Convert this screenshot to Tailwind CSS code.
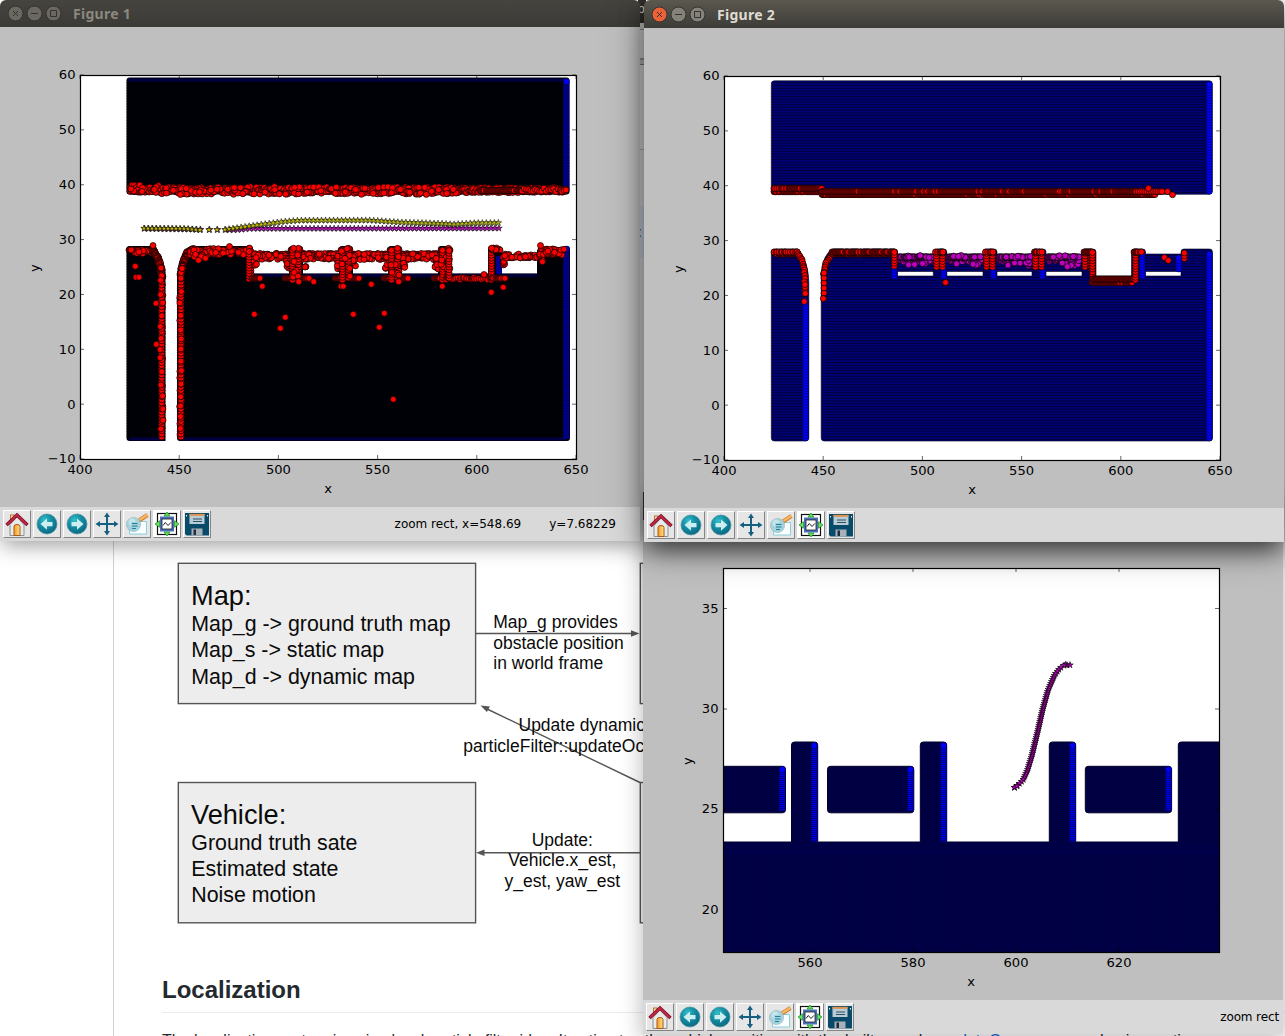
<!DOCTYPE html>
<html lang="en">
<head>
<meta charset="utf-8">
<title>Figures</title>
<script src="https://cdn.jsdelivr.net/npm/@tailwindcss/browser@4"></script>
</head>
<body class="relative h-[1036px] w-[1285px] overflow-hidden bg-white font-['Liberation_Sans',sans-serif]">

<svg class="absolute size-0">
  <defs>
    <radialGradient id="teal" cx=".38" cy=".3" r=".75"><stop offset="0" stop-color="#35c0cc"/><stop offset=".45" stop-color="#148ea3"/><stop offset="1" stop-color="#0a6680"/></radialGradient>
    <linearGradient id="door" x2="1"><stop offset="0" stop-color="#f39a1f"/><stop offset="1" stop-color="#ffe08a"/></linearGradient>
    <symbol id="home" viewBox="0 0 24 24">
      <rect x="5.5" y="3" width="3.5" height="8" fill="#fbe0a8" stroke="#b5652a" stroke-width=".9"/>
      <path d="M5 12.5 12 5l7 7.500V23.500H5Z" fill="#e9eaea" stroke="#8d8f90" stroke-width="1"/>
      <path d="M9 23.500V14.500q0-2 3-2t3 2V23.500Z" fill="url(#door)" stroke="#a85a1c" stroke-width="1"/>
      <path d="M1.500 13 12 3 22.500 13" fill="none" stroke="#7b1028" stroke-width="3.400"/>
      <path d="M2 12.600 12 3.200 22 12.600" fill="none" stroke="#bd2742" stroke-width="2"/>
    </symbol>
    <symbol id="back" viewBox="0 0 24 24"><circle cx="12" cy="12" r="10" fill="url(#teal)" stroke="#4b8f9d" stroke-width=".7"/><path d="M5.500 12 12 6.500v3.500h5.500v4.200H12v3.500Z" fill="#cdeef1"/></symbol>
    <symbol id="forward" viewBox="0 0 24 24"><circle cx="12" cy="12" r="10" fill="url(#teal)" stroke="#4b8f9d" stroke-width=".7"/><path d="M18.500 12 12 6.500v3.500H6.500v4.200H12v3.500Z" fill="#cdeef1"/></symbol>
    <symbol id="move" viewBox="0 0 24 24"><path d="M12 3v18M3 12h18" stroke="#175f80" stroke-width="2"/><path d="M12 .5 15 5H9ZM12 23.500 15 19H9ZM.5 12 5 9v6ZM23.500 12 19 9v6Z" fill="#175f80"/></symbol>
    <symbol id="zoomrect" viewBox="0 0 24 24">
      <path d="M4.500 9.500h17V22h-17Z" fill="#fbfeff" stroke="#86cfdd" stroke-width="1"/>
      <path d="M14 8.500 22.500 3" stroke="#c47a2c" stroke-width="4"/><path d="M14.300 8 22.400 2.900" stroke="#f9b65e" stroke-width="2.600"/>
      <circle cx="8.500" cy="12.500" r="7" fill="#a6d3dc" stroke="#9dbdc4" stroke-width=".8"/><circle cx="7" cy="10" r="3.500" fill="#c5e5ea"/>
      <path d="M6 10h7.500v8H7Z" fill="#9fd3df"/><path d="M7 11.500h5.500M7 14h5.500M7 16.500h4" stroke="#287f98" stroke-width="1"/>
    </symbol>
    <symbol id="subplots" viewBox="0 0 24 24">
      <rect x="2.500" y="1.500" width="19" height="21" fill="#fff" stroke="#111" stroke-width="1.200"/>
      <rect x="5" y="4.500" width="14" height="15" fill="#4a70bb"/><rect x="7" y="7" width="10" height="10" fill="#fff" stroke="#222" stroke-width=".8"/>
      <path d="M8 13.500l2.300-3 2.700 3 2.800-3" fill="none" stroke="#222" stroke-width="1"/>
      <path d="M12 0l3 4H9ZM12 24l3-4H9ZM0 12l4.500-3.300v6.600ZM24 12l-4.500-3.300v6.600Z" fill="#62e25a" stroke="#1d8a22" stroke-width=".7"/>
    </symbol>
    <symbol id="save" viewBox="0 0 24 24">
      <path d="M0 1h24v22.500H1.500L0 22Z" fill="#084a69"/><rect x="4.500" y="2" width="15" height="10" fill="#b9cbd5"/><rect x="4.500" y="1.800" width="15" height="2" fill="#e0934c"/>
      <path d="M8 7h9M8 9.500h9" stroke="#2d5268" stroke-width="1.200"/><path d="M1.500 3v1.500M22.500 3v1.500" stroke="#dfe9ee" stroke-width="1"/>
      <rect x="6.500" y="16.500" width="11" height="7" fill="#a8b0b8"/><rect x="8.500" y="17.500" width="2.500" height="5.500" fill="#1f2d40"/>
    </symbol>
  </defs>
</svg>

<!-- Document page behind the windows -->
<main class="ml-[113px] flex h-full flex-col border-l border-[#d0d1d5] pt-[541px]">
  <svg class="h-[400px] w-[540px] shrink-0 font-['Liberation_Sans',sans-serif]" viewBox="114 541 540 400" fill="#0a0a0a">
    <g fill="#ededed" stroke="#555" stroke-width="1.400">
      <rect x="178.300" y="563.300" width="297.300" height="140.300"/><rect x="178.300" y="782.500" width="297.300" height="140.300"/>
      <rect x="640.300" y="563.300" width="200" height="140.300"/><rect x="640.300" y="782.500" width="200" height="140.300"/>
    </g>
    <g stroke="#555" stroke-width="1.400" fill="none"><path d="M476 633.500H634M640 852.700H482M640 782.500 486 708.500"/></g>
    <path d="M639.500 633.500l-8.500-3.200v6.400ZM476 852.700l8.500-3.200v6.400ZM480.500 705.500l9.400.9-3 5.600Z" fill="#555"/>
    <g font-size="27.200"><text x="191" y="604.700">Map:</text><text x="191" y="823.500">Vehicle:</text></g>
    <g font-size="21.350">
      <text x="191.300" y="631">Map_g -&gt; ground truth map</text><text x="191.300" y="657">Map_s -&gt; static map</text><text x="191.300" y="683.500">Map_d -&gt; dynamic map</text>
      <text x="191.300" y="850">Ground truth sate</text><text x="191.300" y="876">Estimated state</text><text x="191.300" y="902.300">Noise motion</text>
    </g>
    <g font-size="17.500">
      <text x="493.300" y="628">Map_g provides</text><text x="493.300" y="648.700">obstacle position</text><text x="493.300" y="669">in world frame</text>
      <text x="518.500" y="731">Update dynamic map</text><text x="463.300" y="751.500">particleFilter::updateOccupancy</text>
      <g text-anchor="middle"><text x="562.300" y="846">Update:</text><text x="562.300" y="866.300">Vehicle.x_est,</text><text x="562.300" y="887">y_est, yaw_est</text></g>
    </g>
  </svg>
  <h2 class="ml-12 mt-[31px] border-b border-[#eaecef] pb-[5px] text-2xl leading-[35px] font-bold text-[#24292e]">Localization</h2>
  <p class="ml-12 mt-[16px] text-base leading-6 whitespace-nowrap text-[#24292e]">The localization system is using local particle filter idea. It estimates the vehicle position with the built map, by <span class="text-[#0366d6]">updateOccupancy</span>, and noise motion</p>
</main>

<!-- Sliver of the browser window between the two upper figures -->
<div class="absolute left-[638px] top-0 flex h-[541px] w-[8px] flex-col bg-[#f4f5f6]">
  <div class="h-[23px] bg-[#33322e] pt-[1px] text-[12px] leading-4 text-[#dfdbd2]">o</div>
  <div class="h-[7px] border-b border-[#999] bg-[#ddd]"></div>
  <div class="h-[30px] border-b-2 border-[#aaa] bg-[#eee]"></div>
  <div class="h-[5px] border-b border-[#888] bg-[#d5d0cc]"></div>
  <div class="h-[85px] border-b border-[#c8c8c8]"></div>
  <div class="mt-[56px] h-[52px] bg-[#e6effa] pt-[18px] text-[14px] leading-4 text-[#0366d6]">:</div>
</div>

<!-- Figure 3 -->
<section class="absolute left-[643px] top-[492px] flex w-[640px] flex-col shadow-[0_4px_20px_2px_rgba(0,0,0,.25)]">
  <div class="h-7 bg-[#3f3e39]"></div>
  <svg id="fig3" class="h-[480px] w-[640px] bg-[#bfbfbf] font-['DejaVu_Sans',sans-serif] text-[13.1px]" viewBox="643 520 640 480"></svg>
  <div data-toolbar class="flex h-[34px] items-center gap-[2px] bg-[#d9d9d9] pl-[3px] pr-[4px] font-['DejaVu_Sans',sans-serif] text-[12px] tracking-[-0.01em] text-black"><span class="order-last ml-auto">zoom rect</span></div>
</section>

<!-- Figure 1 -->
<section class="absolute left-0 top-0 flex w-[640px] flex-col shadow-[0_6px_20px_-2px_rgba(0,0,0,.4)]">
  <header class="flex h-[27px] items-center rounded-t-md bg-linear-to-b from-[#45443f] to-[#3b3a36] pl-2 font-['Noto_Sans',sans-serif] text-sm font-bold tracking-[0.02em] text-[#8b8880]">
    <svg class="h-[17px] w-[56px]" viewBox="0 0 56 17" fill="#6a6861" stroke="#33322e"><circle cx="7.500" cy="8.500" r="7.500"/><circle cx="26.500" cy="8.500" r="7.500"/><circle cx="45.500" cy="8.500" r="7.500"/><path d="M5 6l5 5M10 6l-5 5M23 8.500h7M42.500 5.500h6v6h-6Z" fill="none"/></svg>
    <span class="ml-[9px]">Figure 1</span>
  </header>
  <svg id="fig1" class="h-[480px] w-[640px] bg-[#bfbfbf] font-['DejaVu_Sans',sans-serif] text-[13.1px]" viewBox="0 27 640 480"></svg>
  <div data-toolbar class="flex h-[34px] items-center gap-[2px] bg-[#d9d9d9] pl-[3px] pr-6 font-['DejaVu_Sans',sans-serif] text-[12px] text-black"><span class="order-last ml-auto">zoom rect, x=548.69</span><span class="order-last ml-[26px]">y=7.68229</span></div>
</section>

<!-- Figure 2, the focused window -->
<section class="absolute left-[644px] top-0 flex w-[640px] flex-col rounded-t-md shadow-[0_10px_24px_-2px_rgba(0,0,0,.65),0_6px_44px_0_rgba(0,0,0,.25)]">
  <header class="flex h-[28px] items-center rounded-t-md bg-linear-to-b from-[#5b584f] to-[#3d3c38] pl-[7px] pt-px font-['Noto_Sans',sans-serif] text-sm font-bold tracking-[0.02em] text-[#dfdbd2]">
    <svg class="h-[17px] w-[56px]" viewBox="0 0 56 17" fill="#85827a" stroke="#33322e"><circle cx="8.500" cy="8.500" r="7.500" fill="#ec6238"/><circle cx="27.500" cy="8.500" r="7.500"/><circle cx="46.500" cy="8.500" r="7.500"/><path d="M6 6l5 5M11 6l-5 5M24 8.500h7M43.500 5.500h6v6h-6Z" fill="none"/></svg>
    <span class="ml-[10px]">Figure 2</span>
  </header>
  <svg id="fig2" class="h-[480px] w-[640px] bg-[#bfbfbf] font-['DejaVu_Sans',sans-serif] text-[13.1px]" viewBox="644 28 640 480"></svg>
  <div data-toolbar class="flex h-[34px] items-center gap-[2px] bg-[#d9d9d9] pl-[3px]"></div>
</section>

<script>
// Toolbar buttons
for (const bar of document.querySelectorAll('[data-toolbar]')) {
  let html = '';
  for (const n of ['home', 'back', 'forward', 'move', 'zoomrect', 'subplots', 'save'])
    html += `<button class="flex size-7 items-center justify-center border border-t-white border-l-white border-r-[#858585] border-b-[#858585] ${n === 'subplots' ? 'bg-white' : 'bg-[#e6e6e6]'}"><svg class="size-6 shrink-0"><use href="#${n}"/></svg></button>`;
  bar.insertAdjacentHTML('afterbegin', html);
}

let seed = 7;
const rnd = () => (seed = (seed * 16807) % 2147483647) / 2147483647;
const jit = a => (rnd() * 2 - 1) * a;
const RED = '#f00', BLUE = '#00f', MAG = '#bf00bf', YEL = '#bfbf00';
const dot = (x, y, c = RED) => `<circle cx="${x.toFixed(1)}" cy="${y.toFixed(1)}" r="3"${c === BLUE ? ' stroke-opacity=".6"' : ''} fill="${c}"/>`;
const star = (x, y, c) => {
  let p = '';
  for (let i = 0; i < 10; i++) {
    const r = i % 2 ? 1.3 : 3.4, a = -Math.PI / 2 + i * Math.PI / 5;
    p += (x + r * Math.cos(a)).toFixed(2) + ',' + (y + r * Math.sin(a)).toFixed(2) + ' ';
  }
  return `<polygon points="${p}" fill="${c}"/>`;
};
const interp = (pts, x) => {
  for (let i = 1; i < pts.length; i++) if (x <= pts[i][0]) {
    const [a, b] = [pts[i - 1], pts[i]];
    return a[1] + (b[1] - a[1]) * (x - a[0]) / (b[0] - a[0]);
  }
  return pts[pts.length - 1][1];
};
const column = (x, y0, y1, c, step = 2.74) => { let s = ''; for (let y = y1; y >= y0; y -= step) s += dot(x, y, c); return s; };
// horizontal run of closely spaced markers with an occasional wider step
const run = (x0, x1, y, c = RED, gap = .04, jy = 0) => { let s = ''; for (let x = x0; x <= x1; x += rnd() < gap ? 2.2 : .8) s += dot(x, y + jit(jy), c); return s + dot(x1, y, c); };
const cloud = (x0, x1, y0, y1, n, c = RED) => { let s = ''; for (let i = 0; i < n; i++) s += dot(x0 + rnd() * (x1 - x0), y0 + rnd() * (y1 - y0), c); return s; };
const trace = (pts, n, j, c = RED) => { let s = ''; for (let k = 1; k < pts.length; k++) for (let i = 0; i < n; i++) { const t = i / n; s += dot(pts[k-1][0] + (pts[k][0]-pts[k-1][0]) * t + jit(j), pts[k-1][1] + (pts[k][1]-pts[k-1][1]) * t + jit(j), c); } return s; };

function figure(id, x, y, xt, yt, defs, body, ylab = 41) {
  let t = '', l = '';
  for (const [px, s] of xt) { t += `M${px} ${y}v4M${px} ${y + 384}v-4`; l += `<text x="${px}" y="${y + 398.600}" text-anchor="middle">${s}</text>`; }
  for (const [py, s] of yt) { t += `M${x} ${py}h4M${x + 496} ${py}h-4`; l += `<text x="${x - 4.5}" y="${py + 4.4}" text-anchor="end">${s}</text>`; }
  document.getElementById(id).innerHTML = `<defs><clipPath id="${id}c"><rect x="${x}" y="${y}" width="496" height="384"/></clipPath>${defs}</defs>
  <rect x="${x}" y="${y}" width="496" height="384" fill="#fff"/><g clip-path="url(#${id}c)">${body}</g>
  <path d="${t}" stroke="#000" stroke-width=".6"/><rect x="${x + .5}" y="${y + .5}" width="496" height="384" fill="none" stroke="#000" stroke-width="1.2"/>${l}
  <text x="${x + 248}" y="${y + 417.600}" text-anchor="middle">x</text><text transform="translate(${x - ylab} ${y + 193}) rotate(-90)" text-anchor="middle">y</text>`;
}
const xt = o => [400, 450, 500, 550, 600, 650].map((v, i) => [o + i * 99.2, v]);
const yt = o => [60, 50, 40, 30, 20, 10, 0, '−10'].map((v, i) => [o + i * 54.86, v]);

// Figure 1
(() => {
  let b = '<g fill="#000007"><rect x="126.500" y="77.500" width="443" height="117" rx="3"/>' +
    '<path d="M126.500 249q0-3 3-3H152Q165 256 165.500 280V441H129.500q-3 0-3-3Z"/>' +
    '<path d="M177 438V275Q179 250 192 246H250q3 0 3 3V273.500H289V249q0-3 3-3h8q3 0 3 3v24.500H339V249q0-3 3-3h8q3 0 3 3v24.500H388V249q0-3 3-3h8q3 0 3 3v24.500H438V249q0-3 3-3h8q3 0 3 3V273.500H488V249q0-3 3-3h8q3 0 3 3v24.500H537V250L567 246q3 0 3 3V438q0 3-3 3H180q-3 0-3-3Z"/></g>';
  b += '<path d="M128 80H566M129 439H164M179 439H566" stroke="#000042" stroke-width="3"/><path d="M253 275.500H537" stroke="#000038" stroke-width="3.500"/><path d="M126.500 82V190M126.500 250V438M165.500 285V438M177.300 285V438" stroke="#333" stroke-width=".6" stroke-dasharray="1 1.700"/>';
  b += '<path d="M566.300 82V191M566.300 249V439M499 256V274" stroke="#000090" stroke-width="6"/><path d="M566.300 82V191M566.300 249V439" stroke="#00005a" stroke-width="6" stroke-dasharray=".7 2"/>';
  b += '<g stroke="#000" stroke-width=".7">' + dot(566.5, 81.5, BLUE) + dot(566.3, 249, BLUE);
  const cy = x => x < 160 ? 188.5 : 190.5;
  b += run(130, 565, 190, RED, .02, 2.5);
  for (let x = 130; x < 566; x += 1.1) b += dot(x, cy(x) + jit(x > 460 ? 2 : 3.6));
  for (let i = 0; i < 130; i++) { const x = 130 + rnd() * 330; b += dot(x, cy(x) + jit(4)); }
  b += run(480, 522, 190.5, RED, .02) + run(522, 566, 190, RED, .9, 2);
  b += run(129, 153, 250) + cloud(130, 154, 249, 254, 22);
  b += trace([[153, 249], [158, 258], [161, 268], [162, 280], [162, 438]], 30, 1.1) + column(161.7, 275, 437, RED, 3.1);
  b += trace([[194, 249], [187, 253], [183, 263], [180.5, 275], [180.7, 350], [180.7, 438]], 26, 1) + column(181, 270, 437, RED, 3.1);
  for (let y = 268; y < 438; y += 8 + rnd() * 8) b += dot(161.5 + jit(1.5), y) + dot(180.8 + jit(1.2), y + jit(4));
  b += run(190, 250, 250) + cloud(190, 250, 248, 255, 70) + cloud(194, 220, 254, 257, 5);
  b += dot(153, 245.5) + dot(229.5, 246.5) + column(251, 249, 279) + column(249, 249, 279);
  for (const [x0, x1] of [[254, 291], [303, 341], [353, 390], [402, 440]]) {
    b += run(x0, x1, 255, RED, .05, 1.5) + cloud(x0, x1, 253.500, 259.500, 55) + cloud(x0, x0 + 3, 256, 268, 6) + cloud(x1 - 5, x1, 256, 269, 10);
    b += run(x0 - 2, x0 + 6, 278.300) + run(x1 - 6, x1, 278.300);
  }
  for (const x of [291, 341, 390, 441]) b += run(x, x + 9, 250) + column(x + 1.5, 248, 280, RED, 2.7) + column(x + 7.5, 248, 278, RED, 2.7) + cloud(x, x + 9, 248, 278, 8);
  b += run(446, 490, 278.5, RED, .5, 1.2) + column(449, 249, 278);
  b += column(491.5, 250, 280) + run(492, 500, 250) + cloud(491, 501, 248, 251, 8) + cloud(503, 505, 258, 270, 6) + run(492, 505, 278.3, RED, .2) + dot(484, 274.5);
  b += run(503, 540, 256, RED, .4, 2) + cloud(503, 540, 255, 258, 22) + cloud(538, 543, 249, 262, 10) + cloud(539, 562, 249, 255, 32) + dot(540.5, 245.5) + dot(564, 249.3);
  for (const [x, y] of [[262.3,286.3],[254.3,314.3],[285.3,317.3],[280.3,328.3],[313.7,281.7],[341,286.3],[343.3,286.3],[135.3,266.3],[136,277.3],[139,277.3],[156,303.3],[156.3,344.3],[371.3,284.3],[353.3,314.3],[384.3,313.3],[379.3,327.3],[442.3,286.3],[491.3,292.3],[503.3,287.3],[393.3,399.3],[298.7,281.7],[398.7,281.7],[198.5,260.3],[205.5,258.3]]) b += dot(x, y);
  b += '</g><g stroke="#000" stroke-width=".55">';
  const xs = []; for (let x = 144; x < 203; x += 4) xs.push(x);
  xs.push(209, 217); for (let x = 225; x < 499; x += 4.02) xs.push(x);
  const pur = [[144, 228.6], [200, 229.5], [235, 230], [250, 228.6], [498, 228.3]];
  const yel = [[144, 228.4], [185, 228.6], [200, 230], [225, 229.6], [245, 226.8], [265, 224], [285, 221.5], [300, 220.4], [370, 220.3], [400, 222.3], [443, 223.6], [453, 224.3], [475, 223], [498, 222.8]];
  for (const x of xs) b += star(x + .6, interp(pur, x), MAG);
  for (const x of xs) b += star(x, interp(yel, x), YEL);
  figure('fig1', 80, 75, xt(80), yt(75), '', b + '</g>');
})();

// Figure 2
(() => {
  let b = '<g fill="url(#stripe)" stroke="#00001c" stroke-width=".6"><rect x="771.300" y="80.800" width="441" height="113.500" rx="3"/>' +
    '<path d="M771.300 252q0-3 3-3H798Q808.500 262 808.800 282V438q0 3-3 3H774.300q-3 0-3-3Z"/>' +
    '<path d="M821.200 438V275Q823 252 834 249H894.500q3 0 3 3V276H933.300V252q0-3 3-3h7.500q3 0 3 3V276H983V252q0-3 3-3h8q3 0 3 3V276H1032V252q0-3 3-3h8q3 0 3 3V276H1082V252q0-3 3-3h8q3 0 3 3V279H1131.500V252q0-3 3-3h8q3 0 3 3V276H1181V252q0-3 3-3h25.500q3 0 3 3V438q0 3-3 3H824.200q-3 0-3-3Z"/>';
  for (const [x, w] of [[897, 37], [946.5, 37], [996, 37], [1045.5, 37], [1145.5, 36]]) b += `<rect x="${x}" y="254" width="${w}" height="17.500"/>`;
  b += '</g><g stroke="#000" stroke-width=".7">';
  b += column(1209.3, 83, 191.300, BLUE) + column(1209.3, 252, 438, BLUE) + column(805.500, 300, 438, BLUE);
  for (const x of [894.300, 943.700, 993.300, 1042.500, 1142.300]) b += column(x, 252, 276, BLUE);
  b += column(1178.800, 257, 269, BLUE);
  for (const [x0, x1] of [[899, 932], [949, 981], [999, 1031], [1048, 1079]]) {
    b += run(x0, x1, 260, MAG, .02, 1.8) + cloud(x1 - 8, x1, 260, 266, 6, MAG) + cloud(x0 + 5, x1 - 3, 262, 266, 3, MAG) + run(x0, x1, 257, MAG, .2) + cloud(x0 + 4, x1, 255.5, 257.5, 7, MAG);
  }
  b += dot(1067.300, 266.700, MAG);
  b += run(774, 822, 191.700, RED, .05) + run(774, 790, 188.500, RED, .4) + run(790, 821.500, 188.500);
  b += run(822, 1155, 194.500, RED, .05) + run(822, 1145, 191.500, RED, .055) + run(1136, 1162, 191.500, RED, .9) + dot(1167.500, 191.500) + dot(1172.500, 194.700) + dot(1148.500, 188.300);
  b += run(776, 797, 254, RED, .1) + run(774, 797, 252, RED, .3);
  b += trace([[797, 252], [802, 260], [804.500, 270], [805, 284]], 5, .5) + column(805, 283, 290, RED) + dot(805.300, 293.500) + dot(804.300, 301.500);
  b += trace([[832, 254], [826, 263], [823, 276]], 6, .3) + column(824, 270, 293, RED, 5) + dot(823.300, 298.600);
  b += run(832, 893, 254) + run(832, 894.500, 252, RED, .08) + column(894.300, 252, 266, RED);
  for (const x of [935.500, 985.500, 1034.500, 1084]) b += column(x + 1, 252, 267, RED) + column(x + 7, 252, 267, RED) + run(x, x + 7.500, 252, RED, .3);
  b += column(1092.500, 252, 280, RED) + run(1092, 1132, 282.500, RED, .06) + run(1093, 1134, 279, RED, .05) + column(1135.500, 252, 280, RED) + run(1134, 1141.500, 252);
  b += dot(1164.500, 257.500) + dot(1168.300, 260.500) + column(1184.300, 252, 258.500, RED) + dot(945.500, 282.500);
  const defs = '<pattern id="stripe" width="10" height="2.743" patternUnits="userSpaceOnUse"><rect width="10" height="2.743" fill="#000074" stroke="none"/><rect width="10" height=".9" fill="#000035" stroke="none"/></pattern>';
  figure('fig2', 724, 76, xt(724), yt(76), defs, b + '</g>');
})();

// Figure 3
(() => {
  let b = '<g fill="#000043" stroke="#00002a" stroke-width="1"><path d="M718 842H791.500V745q0-3 3-3H814.700q3 0 3 3V842H920.300V745q0-3 3-3H943.700q3 0 3 3V842H1049.300V745q0-3 3-3H1072.700q3 0 3 3V842H1178.300V745q0-3 3-3H1225V960H718Z"/>' +
    '<rect x="710" y="766.300" width="75.500" height="46.500" rx="3"/><rect x="827.500" y="766.300" width="86.300" height="46.500" rx="3"/><rect x="1085.300" y="766.300" width="86.300" height="46.500" rx="3"/></g>';
  b += '<path d="M720 851.700H1220" stroke="#000062" stroke-width=".7"/><path d="M723 843h496V855H723Z" fill="#00005a" opacity=".2"/>';
  b += '<path d="M723 856H1219V952H723Z" fill="url(#grid)"/><g stroke="#00003c" stroke-width=".7">';
  for (const x of [814.300, 943.500, 1072.500]) b += `<path d="M${x} 746V841.500" stroke="#0000e6" stroke-width="5.500"/><path d="M${x} 748V841.500" stroke="#000090" stroke-width="5.500" stroke-dasharray=".9 1.100"/>` + dot(x, 745.500, BLUE);
  for (const x of [782.300, 910.500, 1168.500]) b += `<path d="M${x} 770V811" stroke="#0000e6" stroke-width="5.500"/><path d="M${x} 772V811" stroke="#000090" stroke-width="5.500" stroke-dasharray=".9 1.100"/>` + dot(x, 769.500, BLUE);
  b += '</g><g stroke="#000" stroke-width=".6">';
  const c = [[787.5, 1014.5], [785, 1018], [780, 1023], [770, 1027.5], [755, 1032], [730, 1038], [710, 1042.500], [690, 1048], [675, 1054.5], [668, 1060], [665.5, 1064]].reverse();
  b += star(1070, 665, MAG) + star(1067, 665, MAG) + star(1065.500, 664.700, MAG);
  for (let y = 665.5; y <= 787.5; y += 2) b += star(interp(c, y), y, MAG);
  b += star(1014.500, 787.500, MAG) + star(1017, 786, MAG);
  const defs = '<pattern id="grid" width="5.150" height="4" patternUnits="userSpaceOnUse"><path d="M.5 0V4" stroke="#000050" stroke-width=".6"/></pattern>';
  figure('fig3', 723, 568, [[810, 560], [913, 580], [1016, 600], [1119, 620]], [[608.5, 35], [709, 30], [809, 25], [909.5, 20]], defs, b + '</g>', 31);
})();
</script>
</body>
</html>
